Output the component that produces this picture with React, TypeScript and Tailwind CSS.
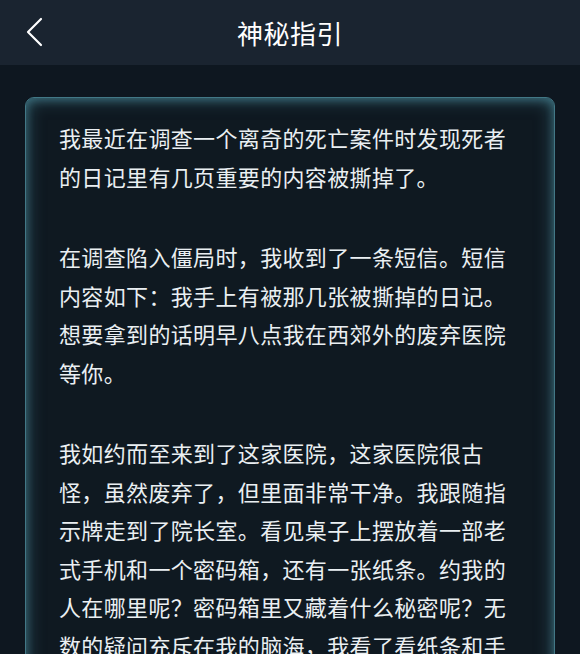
import React from 'react';

const paragraphs = [
  '我最近在调查一个离奇的死亡案件时发现死者的日记里有几页重要的内容被撕掉了。',
  '在调查陷入僵局时，我收到了一条短信。短信内容如下：我手上有被那几张被撕掉的日记。想要拿到的话明早八点我在西郊外的废弃医院等你。',
  '我如约而至来到了这家医院，这家医院很古怪，虽然废弃了，但里面非常干净。我跟随指示牌走到了院长室。看见桌子上摆放着一部老式手机和一个密码箱，还有一张纸条。约我的人在哪里呢？密码箱里又藏着什么秘密呢？无数的疑问充斥在我的脑海，我看了看纸条和手机，决定先从这里开始寻找线索。',
];

const App: React.FC = () => {
  return (
    <div
      className="w-[580px] h-[654px] overflow-hidden bg-[#0e1720] text-[#eaeff2]"
      style={{ fontFamily: '"Noto Sans CJK SC", "Noto Sans", sans-serif' }}
    >
      {/* Header */}
      <div className="relative h-[65px] bg-[#1a2430] flex items-center justify-center">
        <button className="absolute left-[24px] top-[16px] w-[20px] h-[32px] flex items-center justify-center">
          <svg width="18" height="30" viewBox="0 0 18 30" fill="none">
            <path d="M16 2 L3 15 L16 28" stroke="#ffffff" strokeWidth="2.2" strokeLinecap="round" strokeLinejoin="round" />
          </svg>
        </button>
        <h1 className="text-[26px] font-normal tracking-[0.5px] text-white">神秘指引</h1>
      </div>

      {/* Content */}
      <div className="px-[25px] pt-[32px]">
        <div className="rounded-[9px] border border-[#427886] bg-[#0f1921] shadow-[inset_0_0_18px_rgba(72,140,158,0.6),inset_0_2px_8px_rgba(90,160,175,0.45)] pl-[33px] pr-[20px] pt-[20px] pb-[30px]">
          <div className="w-[452px] text-[22px] leading-[38.5px] tracking-[0.35px]">
            {paragraphs.map((p, i) => (
              <p key={i} className={i > 0 ? 'mt-[42px]' : ''}>
                {p}
              </p>
            ))}
          </div>
        </div>
      </div>
    </div>
  );
};

export default App;
